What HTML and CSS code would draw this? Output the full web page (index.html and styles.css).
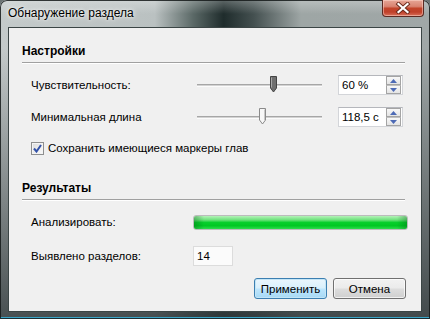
FILE: index.html
```html
<!DOCTYPE html>
<html lang="ru">
<head>
<meta charset="utf-8">
<title>Обнаружение раздела</title>
<link rel="stylesheet" href="styles.css">
</head>
<body>
<div class="window">
  <div class="titlebar">
    <span class="title">Обнаружение раздела</span>
    <div class="close">
      <svg width="18" height="12" viewBox="0 0 18 12"><path d="M4.5 2 L13.5 10 M13.5 2 L4.5 10" stroke="#6a2a1c" stroke-width="4" stroke-linecap="square" fill="none"/><path d="M4.5 2 L13.5 10 M13.5 2 L4.5 10" stroke="#ffffff" stroke-width="2.2" stroke-linecap="square" fill="none"/></svg>
    </div>
  </div>
  <div class="client">
    <div class="content">
      <div class="group-title">Настройки</div>
      <div class="row">
        <span class="label">Чувствительность:</span>
        <div class="slider">
          <div class="track"></div>
          <svg class="thumb" style="left:73px" width="7" height="17" viewBox="0 0 7 17"><path d="M0.5 0.5 H6.5 V12 L3.5 16 L0.5 12 Z" fill="#6f6f6f" stroke="#444"/><path d="M1.5 1.5 V11.5" stroke="#a8a8a8"/></svg>
        </div>
        <div class="spin">
          <span class="spin-value">60 %</span>
          <div class="spin-btns">
            <span class="spin-btn"><svg width="7" height="4" viewBox="0 0 7 4"><path d="M0 4 L3.5 0 L7 4 Z" fill="#4d6ab5"/></svg></span>
            <span class="spin-btn"><svg width="7" height="4" viewBox="0 0 7 4"><path d="M0 0 L3.5 4 L7 0 Z" fill="#4d6ab5"/></svg></span>
          </div>
        </div>
      </div>
      <div class="row">
        <span class="label">Минимальная длина</span>
        <div class="slider">
          <div class="track"></div>
          <svg class="thumb" style="left:62px" width="7" height="17" viewBox="0 0 7 17"><path d="M0.5 0.5 H6.5 V12 L3.5 16 L0.5 12 Z" fill="#f7f7f7" stroke="#8a8a8a"/><path d="M5.5 1.5 V12" stroke="#c8c8c8"/></svg>
        </div>
        <div class="spin">
          <span class="spin-value">118,5 с</span>
          <div class="spin-btns">
            <span class="spin-btn"><svg width="7" height="4" viewBox="0 0 7 4"><path d="M0 4 L3.5 0 L7 4 Z" fill="#4d6ab5"/></svg></span>
            <span class="spin-btn"><svg width="7" height="4" viewBox="0 0 7 4"><path d="M0 0 L3.5 4 L7 0 Z" fill="#4d6ab5"/></svg></span>
          </div>
        </div>
      </div>
      <label class="check-row">
        <span class="checkbox"><svg width="9" height="9" viewBox="0 0 9 9"><path d="M1 4.5 L3.5 7.5 L8 1" stroke="#3352a8" stroke-width="2" fill="none"/></svg></span>
        <span>Сохранить имеющиеся маркеры глав</span>
      </label>

      <div class="group-title group-title-2">Результаты</div>
      <div class="row">
        <span class="label">Анализировать:</span>
        <div class="progress"><div class="progress-fill" style="width:100%"></div></div>
      </div>
      <div class="row row-count">
        <span class="label">Выявлено разделов:</span>
        <div class="field">14</div>
      </div>
      <div class="buttons">
        <button class="btn btn-default">Применить</button>
        <button class="btn">Отмена</button>
      </div>
    </div>
  </div>
</div>
</body>
</html>
```
FILE: styles.css
```css
* { box-sizing: border-box; }
html, body { margin: 0; padding: 0; }
body {
  width: 430px;
  height: 319px;
  font-family: "Liberation Sans", Arial, sans-serif;
  font-size: 11.5px;
  color: #000;
  background: #6c7474;
}
.window {
  width: 430px;
  height: 319px;
  padding: 0 8px 7px 8px;
  border-radius: 7px 7px 0 0;
  display: flex;
  flex-direction: column;
  background:
    linear-gradient(180deg, rgba(255,255,255,.28) 0, rgba(255,255,255,0) 14px),
    linear-gradient(180deg, rgba(50,60,60,0) 15%, rgba(50,58,60,.85) 100%),
    linear-gradient(90deg, #c4caca 0%, #bac1c1 36%, #5a6866 45%, #1f2c2c 52%, #445050 59%, #9ea6a5 70%, #a0a7a7 100%);
  box-shadow: inset 0 0 0 1px rgba(20,25,25,.85), inset 0 -2px 0 #3aa6c8;
}
.titlebar {
  height: 27px;
  flex: none;
  display: flex;
  justify-content: space-between;
  align-items: flex-start;
}
.title {
  margin-top: 6px;
  font-size: 12px;
  color: #000;
  text-shadow: 0 0 6px rgba(255,255,255,.9), 0 0 3px rgba(255,255,255,.9);
}
.close {
  width: 42px;
  height: 17px;
  margin-right: -2px;
  border: 1px solid #5b2a22;
  border-top: none;
  border-radius: 0 0 4px 4px;
  display: flex;
  align-items: center;
  justify-content: center;
  background: linear-gradient(180deg, #e6a696 0%, #d98472 40%, #c2452b 52%, #c0402a 75%, #d8705a 100%);
  box-shadow: inset 0 0 0 1px rgba(255,220,210,.5);
}
.client {
  flex: 1;
  border: 1px solid #3b4545;
  background: #f0f0f0;
}
.content {
  padding: 14px 16px 0 13px;
}
.group-title {
  font-weight: bold;
  font-size: 12px;
  line-height: 18px;
  height: 21px;
  padding-bottom: 2px;
  border-bottom: 1px solid #a0a0a0;
  box-shadow: 0 1px 0 #fff;
}
.group-title-2 {
  margin-top: 22px;
}
.row {
  display: flex;
  align-items: center;
  height: 20px;
  margin-top: 12px;
  padding-left: 9px;
}
.row-count { margin-top: 14px; }
.label {
  width: 162px;
  flex: none;
}
.slider {
  position: relative;
  width: 125px;
  height: 20px;
  margin-left: 4px;
  margin-right: 16px;
  display: flex;
  align-items: center;
}
.track {
  width: 100%;
  height: 3px;
  border-top: 1px solid #a6a6a6;
  border-bottom: 1px solid #fbfbfb;
  background: #d2d2d2;
}
.thumb {
  position: absolute;
  top: 1px;
}
.spin {
  width: 65px;
  height: 20px;
  background: #fff;
  border: 1px solid #d3d5d9;
  border-top-color: #b5b7bc;
  display: flex;
  align-items: center;
  justify-content: space-between;
  padding: 0 1px 0 3px;
}
.spin-value { line-height: 18px; }
.spin-btns {
  display: flex;
  flex-direction: column;
}
.spin-btn {
  width: 15px;
  height: 9px;
  border: 1px solid #a4a4a4;
  background: linear-gradient(180deg, #f8f8f8, #e4e4e4);
  display: flex;
  align-items: center;
  justify-content: center;
}
.spin-btn + .spin-btn { border-top-color: #c0c0c0; }
.check-row {
  display: flex;
  align-items: center;
  gap: 4px;
  height: 18px;
  margin-top: 12px;
  padding-left: 9px;
}
.checkbox {
  width: 13px;
  height: 13px;
  border: 1px solid #8e8f8f;
  background: linear-gradient(135deg, #dcdcdc, #fbfbfb);
  display: flex;
  align-items: center;
  justify-content: center;
  box-shadow: inset 0 0 0 1px #f4f4f4;
}
.progress {
  width: 215px;
  height: 15px;
  border: 1px solid #bcbcbc;
  border-radius: 3px;
  background: #e6e6e6;
  overflow: hidden;
  flex: none;
}
.progress-fill {
  height: 100%;
  background:
    linear-gradient(90deg, rgba(0,90,20,.35) 0, rgba(0,90,20,0) 10px, rgba(0,90,20,0) calc(100% - 10px), rgba(0,90,20,.35) 100%),
    linear-gradient(180deg, #b4f2b8 0%, #6ee27c 30%, #08cf2c 50%, #00c823 75%, #30dc4e 100%);
}
.field {
  width: 40px;
  height: 20px;
  border: 1px solid #dcdcdc;
  background: #fbfbfb;
  padding-left: 3px;
  line-height: 18px;
}
.buttons {
  display: flex;
  justify-content: flex-end;
  gap: 6px;
  margin-top: 12px;
  margin-right: -1px;
}
.btn {
  width: 73px;
  height: 21px;
  padding: 0;
  font-family: "Liberation Sans", Arial, sans-serif;
  font-size: 11.5px;
  color: #000;
  border: 1px solid #707070;
  border-radius: 3px;
  background: linear-gradient(180deg, #f2f2f2 0%, #ebebeb 48%, #dddddd 52%, #cfcfcf 100%);
  box-shadow: inset 0 0 0 1px rgba(255,255,255,.7);
}
.btn-default {
  border-color: #3c7fb1;
  background: linear-gradient(180deg, #eaf6fd 0%, #d9f0fc 48%, #bee6fd 52%, #a7d9f5 100%);
  box-shadow: inset 0 0 0 1px #c4e5f6;
}
```
